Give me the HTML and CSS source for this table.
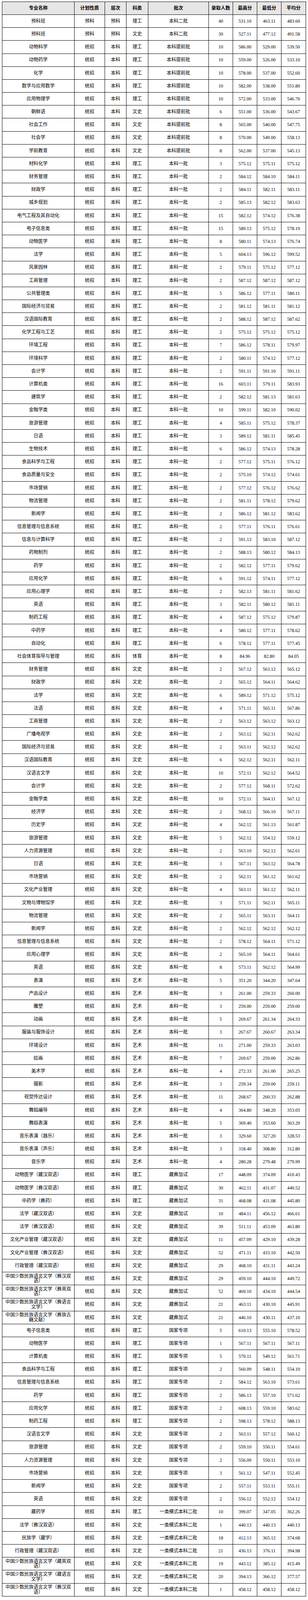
FILE: index.html
```html
<!DOCTYPE html>
<html lang="zh-CN">
<head>
<meta charset="utf-8">
<title>录取分数</title>
<link rel="stylesheet" href="styles.css">
</head>
<body>
<div class="sheet">
<div class="row head"><div>专业名称</div><div>计划性质</div><div>层次</div><div>科类</div><div>批次</div><div>录取人数</div><div>最高分</div><div>最低分</div><div>平均分</div></div>
<div class="row"><div>预科班</div><div>预科</div><div>预科</div><div>理工</div><div>本科二批</div><div>40</div><div>531.10</div><div>463.11</div><div>483.60</div></div>
<div class="row"><div>预科班</div><div>预科</div><div>预科</div><div>文史</div><div>本科二批</div><div>30</div><div>527.11</div><div>477.12</div><div>491.58</div></div>
<div class="row"><div>动物科学</div><div>统招</div><div>本科</div><div>理工</div><div>本科提前批</div><div>10</div><div>586.00</div><div>529.00</div><div>539.50</div></div>
<div class="row"><div>动物药学</div><div>统招</div><div>本科</div><div>理工</div><div>本科提前批</div><div>10</div><div>559.00</div><div>526.00</div><div>533.10</div></div>
<div class="row"><div>化学</div><div>统招</div><div>本科</div><div>理工</div><div>本科提前批</div><div>10</div><div>578.00</div><div>537.00</div><div>552.60</div></div>
<div class="row"><div>数学与应用数学</div><div>统招</div><div>本科</div><div>理工</div><div>本科提前批</div><div>10</div><div>582.00</div><div>538.00</div><div>551.80</div></div>
<div class="row"><div>应用物理学</div><div>统招</div><div>本科</div><div>理工</div><div>本科提前批</div><div>10</div><div>572.00</div><div>533.00</div><div>546.70</div></div>
<div class="row"><div>朝鲜语</div><div>统招</div><div>本科</div><div>文史</div><div>本科提前批</div><div>6</div><div>551.00</div><div>536.00</div><div>543.67</div></div>
<div class="row"><div>社会工作</div><div>统招</div><div>本科</div><div>文史</div><div>本科提前批</div><div>8</div><div>565.00</div><div>540.00</div><div>547.75</div></div>
<div class="row"><div>社会学</div><div>统招</div><div>本科</div><div>文史</div><div>本科提前批</div><div>8</div><div>570.00</div><div>549.00</div><div>558.13</div></div>
<div class="row"><div>学前教育</div><div>统招</div><div>本科</div><div>文史</div><div>本科提前批</div><div>8</div><div>562.00</div><div>537.00</div><div>545.13</div></div>
<div class="row"><div>材料化学</div><div>统招</div><div>本科</div><div>理工</div><div>本科一批</div><div>3</div><div>575.12</div><div>575.11</div><div>575.12</div></div>
<div class="row"><div>财务管理</div><div>统招</div><div>本科</div><div>理工</div><div>本科一批</div><div>2</div><div>584.12</div><div>584.10</div><div>584.11</div></div>
<div class="row"><div>财政学</div><div>统招</div><div>本科</div><div>理工</div><div>本科一批</div><div>2</div><div>584.11</div><div>582.11</div><div>583.11</div></div>
<div class="row"><div>城乡规划</div><div>统招</div><div>本科</div><div>理工</div><div>本科一批</div><div>2</div><div>585.13</div><div>582.12</div><div>583.63</div></div>
<div class="row"><div>电气工程及其自动化</div><div>统招</div><div>本科</div><div>理工</div><div>本科一批</div><div>15</div><div>582.12</div><div>574.12</div><div>576.38</div></div>
<div class="row"><div>电子信息类</div><div>统招</div><div>本科</div><div>理工</div><div>本科一批</div><div>15</div><div>589.13</div><div>575.12</div><div>578.19</div></div>
<div class="row"><div>动物医学</div><div>统招</div><div>本科</div><div>理工</div><div>本科一批</div><div>8</div><div>580.11</div><div>574.13</div><div>576.74</div></div>
<div class="row"><div>法学</div><div>统招</div><div>本科</div><div>理工</div><div>本科一批</div><div>5</div><div>604.13</div><div>596.12</div><div>599.52</div></div>
<div class="row"><div>风景园林</div><div>统招</div><div>本科</div><div>理工</div><div>本科一批</div><div>2</div><div>579.11</div><div>575.12</div><div>577.12</div></div>
<div class="row"><div>工商管理</div><div>统招</div><div>本科</div><div>理工</div><div>本科一批</div><div>2</div><div>587.12</div><div>587.12</div><div>587.12</div></div>
<div class="row"><div>公共管理类</div><div>统招</div><div>本科</div><div>理工</div><div>本科一批</div><div>5</div><div>586.12</div><div>577.11</div><div>580.11</div></div>
<div class="row"><div>国际经济与贸易</div><div>统招</div><div>本科</div><div>理工</div><div>本科一批</div><div>2</div><div>581.12</div><div>581.11</div><div>581.12</div></div>
<div class="row"><div>汉语国际教育</div><div>统招</div><div>本科</div><div>理工</div><div>本科一批</div><div>2</div><div>588.12</div><div>587.12</div><div>587.62</div></div>
<div class="row"><div>化学工程与工艺</div><div>统招</div><div>本科</div><div>理工</div><div>本科一批</div><div>2</div><div>575.12</div><div>575.12</div><div>575.12</div></div>
<div class="row"><div>环境工程</div><div>统招</div><div>本科</div><div>理工</div><div>本科一批</div><div>7</div><div>586.12</div><div>578.11</div><div>579.97</div></div>
<div class="row"><div>环境科学</div><div>统招</div><div>本科</div><div>理工</div><div>本科一批</div><div>2</div><div>580.11</div><div>574.12</div><div>577.12</div></div>
<div class="row"><div>会计学</div><div>统招</div><div>本科</div><div>理工</div><div>本科一批</div><div>2</div><div>591.11</div><div>591.10</div><div>591.11</div></div>
<div class="row"><div>计算机类</div><div>统招</div><div>本科</div><div>理工</div><div>本科一批</div><div>16</div><div>603.11</div><div>579.11</div><div>583.93</div></div>
<div class="row"><div>建筑学</div><div>统招</div><div>本科</div><div>理工</div><div>本科一批</div><div>2</div><div>582.12</div><div>581.13</div><div>581.63</div></div>
<div class="row"><div>金融学类</div><div>统招</div><div>本科</div><div>理工</div><div>本科一批</div><div>10</div><div>599.11</div><div>582.10</div><div>590.02</div></div>
<div class="row"><div>旅游管理</div><div>统招</div><div>本科</div><div>理工</div><div>本科一批</div><div>4</div><div>585.11</div><div>575.12</div><div>578.37</div></div>
<div class="row"><div>日语</div><div>统招</div><div>本科</div><div>理工</div><div>本科一批</div><div>3</div><div>589.12</div><div>581.11</div><div>585.45</div></div>
<div class="row"><div>生物技术</div><div>统招</div><div>本科</div><div>理工</div><div>本科一批</div><div>6</div><div>586.12</div><div>574.13</div><div>578.28</div></div>
<div class="row"><div>食品科学与工程</div><div>统招</div><div>本科</div><div>理工</div><div>本科一批</div><div>2</div><div>577.12</div><div>575.11</div><div>576.12</div></div>
<div class="row"><div>食品质量与安全</div><div>统招</div><div>本科</div><div>理工</div><div>本科一批</div><div>2</div><div>575.10</div><div>574.12</div><div>574.61</div></div>
<div class="row"><div>市场营销</div><div>统招</div><div>本科</div><div>理工</div><div>本科一批</div><div>2</div><div>577.12</div><div>576.12</div><div>576.62</div></div>
<div class="row"><div>物流管理</div><div>统招</div><div>本科</div><div>理工</div><div>本科一批</div><div>2</div><div>581.11</div><div>578.12</div><div>579.62</div></div>
<div class="row"><div>新闻学</div><div>统招</div><div>本科</div><div>理工</div><div>本科一批</div><div>2</div><div>586.12</div><div>581.12</div><div>583.62</div></div>
<div class="row"><div>信息管理与信息系统</div><div>统招</div><div>本科</div><div>理工</div><div>本科一批</div><div>2</div><div>577.11</div><div>576.11</div><div>576.61</div></div>
<div class="row"><div>信息与计算科学</div><div>统招</div><div>本科</div><div>理工</div><div>本科一批</div><div>2</div><div>591.13</div><div>583.10</div><div>587.12</div></div>
<div class="row"><div>药物制剂</div><div>统招</div><div>本科</div><div>理工</div><div>本科一批</div><div>2</div><div>588.13</div><div>580.12</div><div>584.13</div></div>
<div class="row"><div>药学</div><div>统招</div><div>本科</div><div>理工</div><div>本科一批</div><div>2</div><div>582.12</div><div>577.11</div><div>579.62</div></div>
<div class="row"><div>应用化学</div><div>统招</div><div>本科</div><div>理工</div><div>本科一批</div><div>6</div><div>591.12</div><div>574.11</div><div>577.12</div></div>
<div class="row"><div>应用心理学</div><div>统招</div><div>本科</div><div>理工</div><div>本科一批</div><div>2</div><div>582.13</div><div>581.11</div><div>581.62</div></div>
<div class="row"><div>英语</div><div>统招</div><div>本科</div><div>理工</div><div>本科一批</div><div>3</div><div>582.11</div><div>580.12</div><div>581.11</div></div>
<div class="row"><div>制药工程</div><div>统招</div><div>本科</div><div>理工</div><div>本科一批</div><div>4</div><div>587.12</div><div>575.12</div><div>579.87</div></div>
<div class="row"><div>中药学</div><div>统招</div><div>本科</div><div>理工</div><div>本科一批</div><div>4</div><div>580.12</div><div>577.11</div><div>578.62</div></div>
<div class="row"><div>自动化</div><div>统招</div><div>本科</div><div>理工</div><div>本科一批</div><div>6</div><div>578.12</div><div>577.11</div><div>577.45</div></div>
<div class="row"><div>社会体育指导与管理</div><div>统招</div><div>本科</div><div>体育</div><div>本科一批</div><div>8</div><div>84.96</div><div>82.80</div><div>84.05</div></div>
<div class="row"><div>财务管理</div><div>统招</div><div>本科</div><div>文史</div><div>本科一批</div><div>2</div><div>567.12</div><div>563.12</div><div>565.12</div></div>
<div class="row"><div>财政学</div><div>统招</div><div>本科</div><div>文史</div><div>本科一批</div><div>2</div><div>565.12</div><div>564.11</div><div>564.62</div></div>
<div class="row"><div>法学</div><div>统招</div><div>本科</div><div>文史</div><div>本科一批</div><div>6</div><div>589.12</div><div>571.12</div><div>575.12</div></div>
<div class="row"><div>法语</div><div>统招</div><div>本科</div><div>文史</div><div>本科一批</div><div>4</div><div>571.11</div><div>565.11</div><div>567.86</div></div>
<div class="row"><div>工商管理</div><div>统招</div><div>本科</div><div>文史</div><div>本科一批</div><div>2</div><div>563.12</div><div>563.12</div><div>563.12</div></div>
<div class="row"><div>广播电视学</div><div>统招</div><div>本科</div><div>文史</div><div>本科一批</div><div>2</div><div>563.12</div><div>562.11</div><div>562.62</div></div>
<div class="row"><div>国际经济与贸易</div><div>统招</div><div>本科</div><div>文史</div><div>本科一批</div><div>2</div><div>563.11</div><div>562.12</div><div>562.62</div></div>
<div class="row"><div>汉语国际教育</div><div>统招</div><div>本科</div><div>文史</div><div>本科一批</div><div>6</div><div>562.12</div><div>562.11</div><div>562.11</div></div>
<div class="row"><div>汉语言文学</div><div>统招</div><div>本科</div><div>文史</div><div>本科一批</div><div>10</div><div>572.11</div><div>562.12</div><div>564.52</div></div>
<div class="row"><div>会计学</div><div>统招</div><div>本科</div><div>文史</div><div>本科一批</div><div>2</div><div>577.12</div><div>568.11</div><div>572.62</div></div>
<div class="row"><div>金融学类</div><div>统招</div><div>本科</div><div>文史</div><div>本科一批</div><div>10</div><div>572.11</div><div>564.11</div><div>567.12</div></div>
<div class="row"><div>经济学</div><div>统招</div><div>本科</div><div>文史</div><div>本科一批</div><div>2</div><div>568.12</div><div>566.10</div><div>567.11</div></div>
<div class="row"><div>历史学</div><div>统招</div><div>本科</div><div>文史</div><div>本科一批</div><div>4</div><div>562.12</div><div>561.13</div><div>561.87</div></div>
<div class="row"><div>旅游管理</div><div>统招</div><div>本科</div><div>文史</div><div>本科一批</div><div>5</div><div>562.12</div><div>554.12</div><div>559.12</div></div>
<div class="row"><div>人力资源管理</div><div>统招</div><div>本科</div><div>文史</div><div>本科一批</div><div>2</div><div>563.10</div><div>562.12</div><div>562.61</div></div>
<div class="row"><div>日语</div><div>统招</div><div>本科</div><div>文史</div><div>本科一批</div><div>3</div><div>567.11</div><div>563.12</div><div>564.78</div></div>
<div class="row"><div>市场营销</div><div>统招</div><div>本科</div><div>文史</div><div>本科一批</div><div>2</div><div>562.11</div><div>561.12</div><div>561.62</div></div>
<div class="row"><div>文化产业管理</div><div>统招</div><div>本科</div><div>文史</div><div>本科一批</div><div>4</div><div>563.11</div><div>561.12</div><div>562.11</div></div>
<div class="row"><div>文物与博物馆学</div><div>统招</div><div>本科</div><div>文史</div><div>本科一批</div><div>3</div><div>571.11</div><div>562.11</div><div>565.11</div></div>
<div class="row"><div>物流管理</div><div>统招</div><div>本科</div><div>文史</div><div>本科一批</div><div>2</div><div>565.11</div><div>563.11</div><div>564.11</div></div>
<div class="row"><div>新闻学</div><div>统招</div><div>本科</div><div>文史</div><div>本科一批</div><div>2</div><div>562.12</div><div>562.12</div><div>562.12</div></div>
<div class="row"><div>信息管理与信息系统</div><div>统招</div><div>本科</div><div>文史</div><div>本科一批</div><div>2</div><div>578.12</div><div>564.11</div><div>571.12</div></div>
<div class="row"><div>应用心理学</div><div>统招</div><div>本科</div><div>文史</div><div>本科一批</div><div>2</div><div>565.10</div><div>564.11</div><div>564.61</div></div>
<div class="row"><div>英语</div><div>统招</div><div>本科</div><div>文史</div><div>本科一批</div><div>8</div><div>573.11</div><div>562.12</div><div>564.99</div></div>
<div class="row"><div>表演</div><div>统招</div><div>本科</div><div>艺术</div><div>本科一批</div><div>5</div><div>351.20</div><div>344.20</div><div>347.64</div></div>
<div class="row"><div>产品设计</div><div>统招</div><div>本科</div><div>艺术</div><div>本科一批</div><div>3</div><div>261.00</div><div>259.33</div><div>260.00</div></div>
<div class="row"><div>雕塑</div><div>统招</div><div>本科</div><div>艺术</div><div>本科一批</div><div>3</div><div>259.00</div><div>259.00</div><div>259.00</div></div>
<div class="row"><div>动画</div><div>统招</div><div>本科</div><div>艺术</div><div>本科一批</div><div>5</div><div>269.67</div><div>261.34</div><div>264.33</div></div>
<div class="row"><div>服装与服饰设计</div><div>统招</div><div>本科</div><div>艺术</div><div>本科一批</div><div>3</div><div>267.67</div><div>260.67</div><div>263.34</div></div>
<div class="row"><div>环境设计</div><div>统招</div><div>本科</div><div>艺术</div><div>本科一批</div><div>11</div><div>271.00</div><div>259.33</div><div>263.03</div></div>
<div class="row"><div>绘画</div><div>统招</div><div>本科</div><div>艺术</div><div>本科一批</div><div>7</div><div>269.67</div><div>259.00</div><div>262.86</div></div>
<div class="row"><div>美术学</div><div>统招</div><div>本科</div><div>艺术</div><div>本科一批</div><div>4</div><div>272.33</div><div>261.00</div><div>265.25</div></div>
<div class="row"><div>摄影</div><div>统招</div><div>本科</div><div>艺术</div><div>本科一批</div><div>3</div><div>259.34</div><div>259.00</div><div>259.11</div></div>
<div class="row"><div>视觉传达设计</div><div>统招</div><div>本科</div><div>艺术</div><div>本科一批</div><div>11</div><div>268.67</div><div>260.33</div><div>262.88</div></div>
<div class="row"><div>舞蹈编导</div><div>统招</div><div>本科</div><div>艺术</div><div>本科一批</div><div>4</div><div>364.80</div><div>348.20</div><div>353.05</div></div>
<div class="row"><div>舞蹈表演</div><div>统招</div><div>本科</div><div>艺术</div><div>本科一批</div><div>5</div><div>369.40</div><div>353.60</div><div>363.20</div></div>
<div class="row"><div>音乐表演（器乐）</div><div>统招</div><div>本科</div><div>艺术</div><div>本科一批</div><div>3</div><div>329.60</div><div>327.20</div><div>328.53</div></div>
<div class="row"><div>音乐表演（声乐）</div><div>统招</div><div>本科</div><div>艺术</div><div>本科一批</div><div>3</div><div>318.40</div><div>308.80</div><div>312.80</div></div>
<div class="row"><div>音乐学</div><div>统招</div><div>本科</div><div>艺术</div><div>本科一批</div><div>4</div><div>280.28</div><div>279.48</div><div>279.99</div></div>
<div class="row"><div>动物医学（藏汉双语）</div><div>统招</div><div>本科</div><div>理工</div><div>藏彝加试</div><div>17</div><div>448.09</div><div>374.09</div><div>410.43</div></div>
<div class="row"><div>动物医学（彝汉双语）</div><div>统招</div><div>本科</div><div>理工</div><div>藏彝加试</div><div>30</div><div>462.11</div><div>431.07</div><div>440.52</div></div>
<div class="row"><div>中药学（彝药）</div><div>统招</div><div>本科</div><div>理工</div><div>藏彝加试</div><div>31</div><div>468.08</div><div>431.08</div><div>445.80</div></div>
<div class="row"><div>法学（藏汉双语）</div><div>统招</div><div>本科</div><div>文史</div><div>藏彝加试</div><div>10</div><div>484.11</div><div>456.12</div><div>466.61</div></div>
<div class="row"><div>法学（彝汉双语）</div><div>统招</div><div>本科</div><div>文史</div><div>藏彝加试</div><div>39</div><div>511.11</div><div>453.09</div><div>463.80</div></div>
<div class="row"><div>文化产业管理（藏汉双语）</div><div>统招</div><div>本科</div><div>文史</div><div>藏彝加试</div><div>11</div><div>457.09</div><div>429.10</div><div>439.28</div></div>
<div class="row"><div>文化产业管理（彝汉双语）</div><div>统招</div><div>本科</div><div>文史</div><div>藏彝加试</div><div>52</div><div>471.11</div><div>433.10</div><div>442.50</div></div>
<div class="row"><div>行政管理（藏汉双语）</div><div>统招</div><div>本科</div><div>文史</div><div>藏彝加试</div><div>29</div><div>468.10</div><div>431.11</div><div>443.24</div></div>
<div class="row"><div>中国少数民族语言文学（彝汉双语）</div><div>统招</div><div>本科</div><div>文史</div><div>藏彝加试</div><div>29</div><div>459.10</div><div>444.10</div><div>449.72</div></div>
<div class="row"><div>中国少数民族语言文学（彝英双语）</div><div>统招</div><div>本科</div><div>文史</div><div>藏彝加试</div><div>52</div><div>469.10</div><div>434.10</div><div>444.54</div></div>
<div class="row"><div>中国少数民族语言文学（彝语言文学）</div><div>统招</div><div>本科</div><div>文史</div><div>藏彝加试</div><div>21</div><div>463.11</div><div>430.10</div><div>445.91</div></div>
<div class="row"><div>中国少数民族语言文学（彝族古籍文献）</div><div>统招</div><div>本科</div><div>文史</div><div>藏彝加试</div><div>21</div><div>446.10</div><div>430.11</div><div>437.10</div></div>
<div class="row"><div>电子信息类</div><div>统招</div><div>本科</div><div>理工</div><div>国家专项</div><div>5</div><div>610.13</div><div>555.10</div><div>578.52</div></div>
<div class="row"><div>动物医学</div><div>统招</div><div>本科</div><div>理工</div><div>国家专项</div><div>1</div><div>567.11</div><div>567.11</div><div>567.11</div></div>
<div class="row"><div>计算机类</div><div>统招</div><div>本科</div><div>理工</div><div>国家专项</div><div>5</div><div>570.11</div><div>549.12</div><div>561.71</div></div>
<div class="row"><div>食品科学与工程</div><div>统招</div><div>本科</div><div>理工</div><div>国家专项</div><div>2</div><div>560.09</div><div>548.11</div><div>554.10</div></div>
<div class="row"><div>信息管理与信息系统</div><div>统招</div><div>本科</div><div>理工</div><div>国家专项</div><div>2</div><div>584.12</div><div>563.10</div><div>573.61</div></div>
<div class="row"><div>药学</div><div>统招</div><div>本科</div><div>理工</div><div>国家专项</div><div>2</div><div>586.13</div><div>557.10</div><div>571.62</div></div>
<div class="row"><div>应用化学</div><div>统招</div><div>本科</div><div>理工</div><div>国家专项</div><div>2</div><div>608.13</div><div>559.10</div><div>583.62</div></div>
<div class="row"><div>制药工程</div><div>统招</div><div>本科</div><div>理工</div><div>国家专项</div><div>2</div><div>598.13</div><div>578.12</div><div>588.13</div></div>
<div class="row"><div>汉语言文学</div><div>统招</div><div>本科</div><div>文史</div><div>国家专项</div><div>2</div><div>563.11</div><div>557.12</div><div>560.12</div></div>
<div class="row"><div>旅游管理</div><div>统招</div><div>本科</div><div>文史</div><div>国家专项</div><div>2</div><div>559.10</div><div>550.11</div><div>554.61</div></div>
<div class="row"><div>人力资源管理</div><div>统招</div><div>本科</div><div>文史</div><div>国家专项</div><div>2</div><div>556.09</div><div>550.11</div><div>553.10</div></div>
<div class="row"><div>市场营销</div><div>统招</div><div>本科</div><div>文史</div><div>国家专项</div><div>3</div><div>561.12</div><div>547.11</div><div>552.45</div></div>
<div class="row"><div>新闻学</div><div>统招</div><div>本科</div><div>文史</div><div>国家专项</div><div>2</div><div>557.11</div><div>553.11</div><div>555.11</div></div>
<div class="row"><div>英语</div><div>统招</div><div>本科</div><div>文史</div><div>国家专项</div><div>2</div><div>556.12</div><div>552.12</div><div>554.12</div></div>
<div class="row"><div>藏药学</div><div>统招</div><div>本科</div><div>理工</div><div>一类模式本科二批</div><div>10</div><div>399.07</div><div>347.05</div><div>362.26</div></div>
<div class="row"><div>法学（彝汉双语）</div><div>统招</div><div>本科</div><div>文史</div><div>一类模式本科二批</div><div>1</div><div>440.13</div><div>440.13</div><div>440.13</div></div>
<div class="row"><div>民族学（藏学）</div><div>统招</div><div>本科</div><div>文史</div><div>一类模式本科二批</div><div>18</div><div>412.13</div><div>365.12</div><div>374.68</div></div>
<div class="row"><div>行政管理（藏汉双语）</div><div>统招</div><div>本科</div><div>文史</div><div>一类模式本科二批</div><div>21</div><div>436.13</div><div>376.11</div><div>394.98</div></div>
<div class="row"><div>中国少数民族语言文学（藏英双语）</div><div>统招</div><div>本科</div><div>文史</div><div>一类模式本科二批</div><div>19</div><div>443.12</div><div>385.12</div><div>415.49</div></div>
<div class="row"><div>中国少数民族语言文学（藏语言文学）</div><div>统招</div><div>本科</div><div>文史</div><div>一类模式本科二批</div><div>20</div><div>394.13</div><div>366.12</div><div>377.57</div></div>
<div class="row"><div>中国少数民族语言文学（彝汉双语）</div><div>统招</div><div>本科</div><div>文史</div><div>一类模式本科二批</div><div>1</div><div>458.12</div><div>458.12</div><div>458.12</div></div>
</div>
</body>
</html>
```

FILE: styles.css
```css
html, body {
  margin: 0;
  padding: 0;
  background: #ffffff;
}

/* The capture window is 4096px tall and is stretched to the 4319px frame,
   so vertical sizes are expressed at 4096/4319 of the reference. */
.sheet {
  margin: 3.8px 0 0 5px;
  width: 779px;
  border-top: 1px solid #000000;
  border-left: 1px solid #000000;
  font-family: "Liberation Serif", "Noto Sans CJK SC", serif;
  font-size: 12px;
  line-height: 12.6px;
  color: #000000;
}

.row {
  display: grid;
  grid-template-columns: 185px 78px 55px 56px 155px 62px 62px 62px 63px;
  height: 33.2px;
}

.row > div {
  box-sizing: border-box;
  border-right: 1px solid #000000;
  border-bottom: 1px solid #000000;
  display: flex;
  align-items: center;
  justify-content: center;
  text-align: center;
  padding: 0 6px;
  overflow: hidden;
  min-width: 0;
}

.head > div {
  background: #e7e6e6;
  font-weight: bold;
}
```
